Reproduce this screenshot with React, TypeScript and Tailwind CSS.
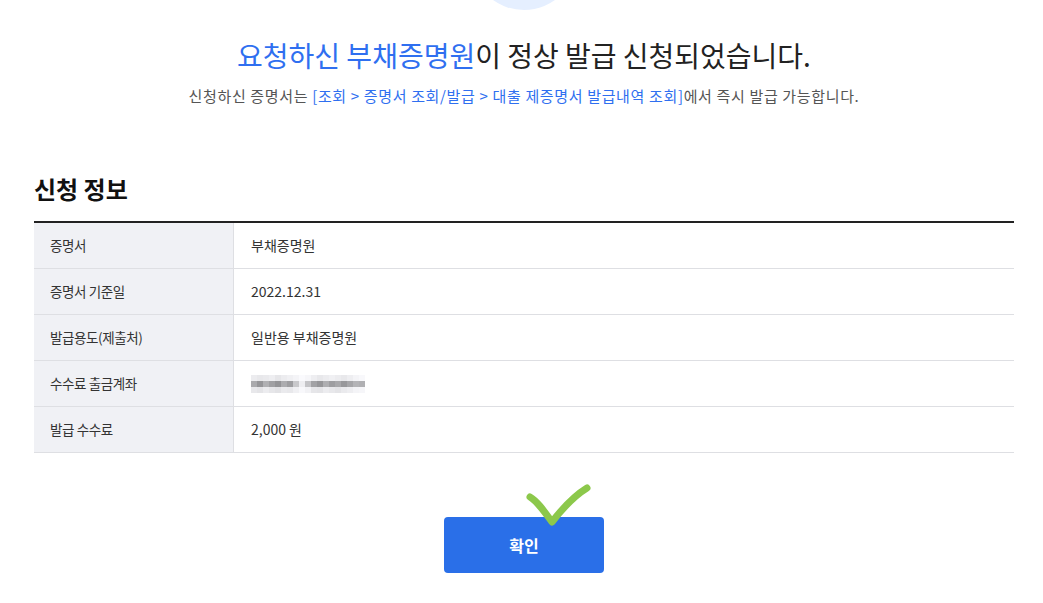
import React from 'react';

// mosaic stand-in for the masked account number
const mosaic = [
  [236, 232, 234, 238, 230, 236, 240, 244, 250, 246, 238, 232, 236, 240, 236, 232, 238, 244, 248],
  [170, 150, 176, 160, 148, 172, 158, 200, 238, 196, 162, 150, 174, 158, 168, 152, 166, 180, 176],
  [232, 228, 236, 230, 226, 234, 232, 240, 248, 242, 230, 228, 236, 232, 228, 234, 238, 244, 246],
];

function Masked() {
  return (
    <span className="flex flex-col blur-[0.6px]">
      {mosaic.map((row, i) => (
        <span key={i} className="flex">
          {row.map((g, j) => (
            <span key={j} className="h-[6px] w-[6px]" style={{ backgroundColor: `rgb(${g},${g},${g + 3})` }} />
          ))}
        </span>
      ))}
    </span>
  );
}

const rows: { label: string; value: React.ReactNode }[] = [
  { label: '증명서', value: '부채증명원' },
  { label: '증명서 기준일', value: '2022.12.31' },
  { label: '발급용도(제출처)', value: '일반용 부채증명원' },
  { label: '수수료 출금계좌', value: <Masked /> },
  { label: '발급 수수료', value: '2,000 원' },
];

export default function App() {
  return (
    <div
      className="relative min-h-[603px] w-full overflow-hidden bg-white pl-[5px] text-[#222]"
      style={{ fontFamily: '"Noto Sans CJK KR", "Noto Sans", sans-serif' }}
    >
      <div className="flex justify-center">
        <div className="mt-[-96px] h-[106px] w-[106px] rounded-full bg-[#e5efff]" />
      </div>

      <div className="mt-[26px] flex flex-col items-center">
        <h1 className="text-[28px] leading-[38px] text-[#222]">
          <span className="text-[#2f6ff0]">요청하신 부채증명원</span>이 정상 발급 신청되었습니다.
        </h1>
        <p className="mt-[11px] text-[15px] leading-[22px] tracking-[0.65px] text-[#555]">
          신청하신 증명서는{' '}
          <span className="text-[#2f6ff0]">[조회 &gt; 증명서 조회/발급 &gt; 대출 제증명서 발급내역 조회]</span>
          에서 즉시 발급 가능합니다.
        </p>
      </div>

      <div className="mx-[29px] mt-[66px]">
        <h2 className="text-[24px] font-bold leading-[32px] text-[#111]">신청 정보</h2>
        <div className="mt-[16px] border-t-2 border-[#222]">
          {rows.map((r) => (
            <div key={r.label} className="flex h-[46px] border-b border-[#dedfe3]">
              <div className="flex w-[200px] items-center border-r border-[#dedfe3] bg-[#f0f1f5] pl-[16px] text-[13.5px] tracking-[-0.4px] text-[#333]">
                {r.label}
              </div>
              <div className="flex items-center pl-[17px] text-[14px] text-[#333]">{r.value}</div>
            </div>
          ))}
        </div>
      </div>

      <div className="mt-[64px] flex justify-center">
        <button className="h-[56px] w-[160px] rounded-[4px] bg-[#2a6fe8] text-[16px] font-bold text-white">
          확인
        </button>
      </div>

      <svg
        className="pointer-events-none absolute left-[520px] top-[479px]"
        width="80"
        height="52"
        viewBox="0 0 80 52"
      >
        <path
          d="M10 18 C 17 22, 24 32, 32 43 C 42 30, 54 17, 67 9"
          fill="none"
          stroke="#8cc84b"
          strokeWidth="7"
          strokeLinecap="round"
          strokeLinejoin="round"
        />
      </svg>
    </div>
  );
}
